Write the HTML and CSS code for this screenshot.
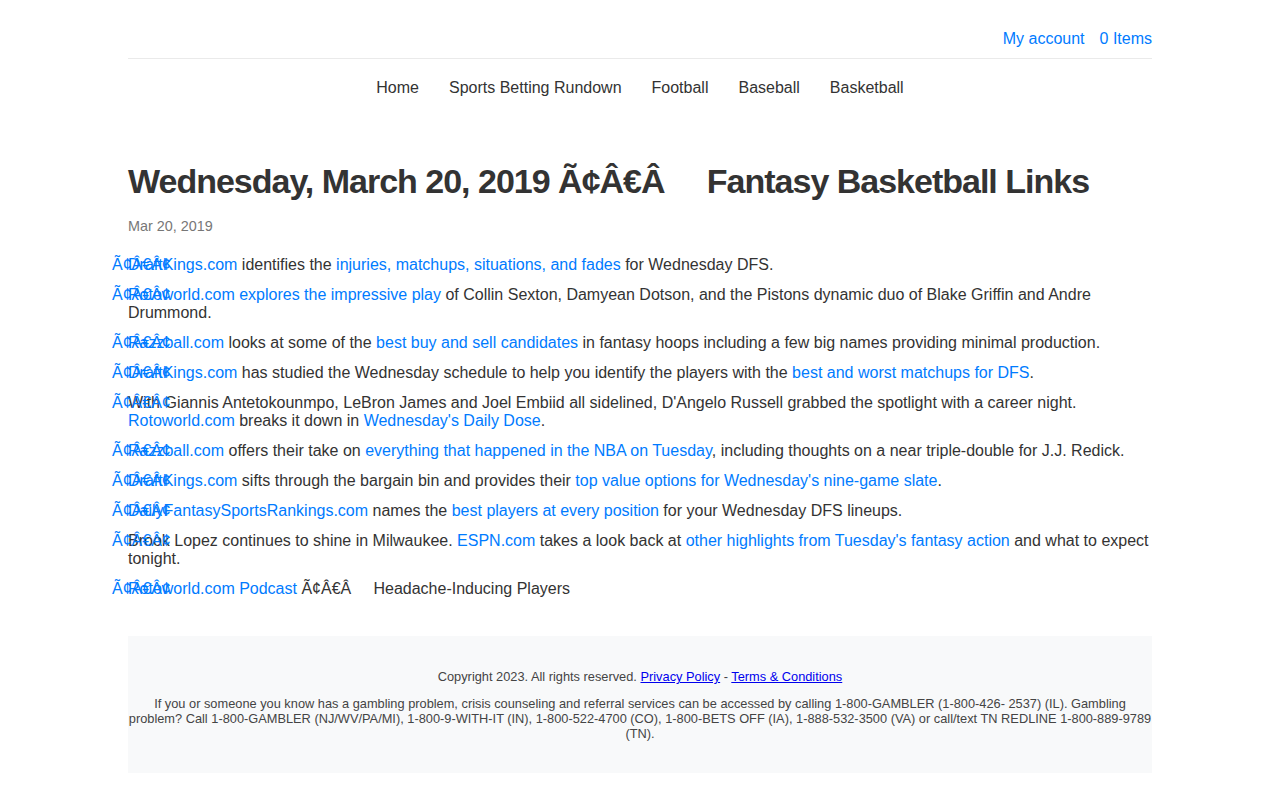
FILE: index.html
```html
<!DOCTYPE html>
<html lang="en">
<head>
<meta charset="utf-8">
<title>Fantasy Basketball Links</title>
<link rel="stylesheet" href="styles.css">
</head>
<body>
<div class="container">
  <header class="topbar">
    <a href="#">My account</a>
    <a href="#">0 Items</a>
  </header>
  <nav class="mainnav">
    <a href="#">Home</a>
    <a href="#">Sports Betting Rundown</a>
    <a href="#">Football</a>
    <a href="#">Baseball</a>
    <a href="#">Basketball</a>
  </nav>
  <main class="post">
    <h1 class="post-title">Wednesday, March 20, 2019 Ã¢Â€Â&nbsp;&nbsp;&nbsp;&nbsp; Fantasy Basketball Links</h1>
    <div class="post-date">Mar 20, 2019</div>
    <ul class="links">
      <li><a href="#">DraftKings.com</a> identifies the <a href="#">injuries, matchups, situations, and fades</a> for Wednesday DFS.</li>
      <li><a href="#">Rotoworld.com explores the impressive play</a> of Collin Sexton, Damyean Dotson, and the Pistons dynamic duo of Blake Griffin and Andre Drummond.</li>
      <li><a href="#">Razzball.com</a> looks at some of the <a href="#">best buy and sell candidates</a> in fantasy hoops including a few big names providing minimal production.</li>
      <li><a href="#">DraftKings.com</a> has studied the Wednesday schedule to help you identify the players with the <a href="#">best and worst matchups for DFS</a>.</li>
      <li>With Giannis Antetokounmpo, LeBron James and Joel Embiid all sidelined, D'Angelo Russell grabbed the spotlight with a career night. <a href="#">Rotoworld.com</a> breaks it down in <a href="#">Wednesday's Daily Dose</a>.</li>
      <li><a href="#">Razzball.com</a> offers their take on <a href="#">everything that happened in the NBA on Tuesday</a>, including thoughts on a near triple-double for J.J. Redick.</li>
      <li><a href="#">DraftKings.com</a> sifts through the bargain bin and provides their <a href="#">top value options for Wednesday's nine-game slate</a>.</li>
      <li><a href="#">DailyFantasySportsRankings.com</a> names the <a href="#">best players at every position</a> for your Wednesday DFS lineups.</li>
      <li>Brook Lopez continues to shine in Milwaukee. <a href="#">ESPN.com</a> takes a look back at <a href="#">other highlights from Tuesday's fantasy action</a> and what to expect tonight.</li>
      <li><a href="#">Rotoworld.com Podcast</a> Ã¢Â€Â&nbsp;&nbsp;&nbsp;&nbsp; Headache-Inducing Players</li>
    </ul>
  </main>
  <footer class="footer">
    <p class="copy">Copyright 2023. All rights reserved. <a href="#">Privacy Policy</a> - <a href="#">Terms &amp; Conditions</a></p>
    <p class="notice">If you or someone you know has a gambling problem, crisis counseling and referral services can be accessed by calling 1-800-GAMBLER (1-800-426- 2537) (IL). Gambling problem? Call 1-800-GAMBLER (NJ/WV/PA/MI), 1-800-9-WITH-IT (IN), 1-800-522-4700 (CO), 1-800-BETS OFF (IA), 1-888-532-3500 (VA) or call/text TN REDLINE 1-800-889-9789 (TN).</p>
  </footer>
</div>
</body>
</html>
```

FILE: styles.css
```css
* { box-sizing: border-box; }

html, body {
  margin: 0;
  padding: 0;
  background: #fff;
}

body {
  font-family: "Liberation Sans", Arial, Helvetica, sans-serif;
  font-size: 16px;
  color: #333;
}

a {
  color: #007bff;
  text-decoration: none;
}

.container {
  width: 1024px;
  margin: 0 auto;
}

.topbar {
  display: flex;
  justify-content: flex-end;
  gap: 15px;
  padding: 29px 0 9px;
  line-height: 20px;
  border-bottom: 1px solid #eaeaea;
}

.mainnav {
  display: flex;
  justify-content: center;
  gap: 30px;
  padding-top: 19px;
  line-height: 20px;
}

.mainnav a {
  color: #333;
}

.post {
  padding-top: 62px;
}

.post-title {
  margin: 0;
  font-size: 34px;
  letter-spacing: -1px;
  font-weight: bold;
  line-height: 42px;
  color: #333;
}

.post-date {
  margin-top: 14px;
  font-size: 14.4px;
  line-height: 20px;
  color: #777;
}

.links {
  list-style: none;
  margin: 20px 0 0;
  padding: 0;
}

.links li {
  position: relative;
  line-height: 18px;
  margin-bottom: 12px;
}

.links li:last-child {
  margin-bottom: 0;
}

.links li::before {
  content: "Ã¢Â€Â¢";
  position: absolute;
  left: -16px;
  top: 0;
  color: #007bff;
}

.footer {
  margin-top: 38px;
  background: #f8f9fa;
  padding: 33px 0 32px;
  text-align: center;
  font-size: 12.8px;
  line-height: 15px;
  color: #444;
}

.footer p {
  margin: 0;
}

.footer .copy {
  margin-bottom: 12px;
}

.footer a {
  color: #0000ee;
  text-decoration: underline;
}
```
